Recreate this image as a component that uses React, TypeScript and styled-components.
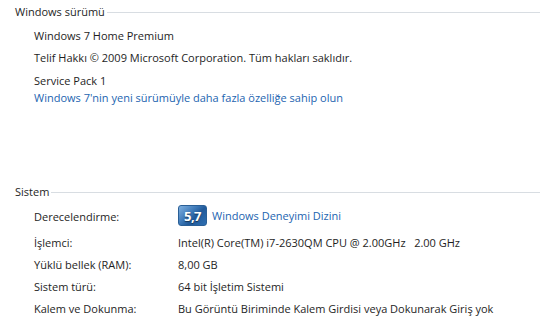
import React from "react";
import styled, { createGlobalStyle } from "styled-components";

const GlobalStyle = createGlobalStyle`
  body {
    margin: 0;
    background: #ffffff;
    font-family: "Open Sans", "Noto Sans", sans-serif;
    font-size: 11px;
    color: #1e1e1e;
  }
`;

const systemRows = [
  { label: "İşlemci:", value: "Intel(R) Core(TM) i7-2630QM CPU @ 2.00GHz   2.00 GHz" },
  { label: "Yüklü bellek (RAM):", value: "8,00 GB" },
  { label: "Sistem türü:", value: "64 bit İşletim Sistemi" },
  { label: "Kalem ve Dokunma:", value: "Bu Görüntü Biriminde Kalem Girdisi veya Dokunarak Giriş yok" },
];

function App() {
  return (
    <Page>
      <GlobalStyle />
      <Section>
        <Header>
          <HeaderText>Windows sürümü</HeaderText>
          <HeaderLine />
        </Header>
        <Body>
          <Line $gap={7}>Windows 7 Home Premium</Line>
          <Line $gap={8}>Telif Hakkı © 2009 Microsoft Corporation. Tüm hakları saklıdır.</Line>
          <Line $gap={2}>Service Pack 1</Line>
          <Link>Windows 7'nin yeni sürümüyle daha fazla özelliğe sahip olun</Link>
        </Body>
      </Section>

      <Section $top={78}>
        <Header>
          <HeaderText>Sistem</HeaderText>
          <HeaderLine />
        </Header>
        <Grid>
          <Label>Derecelendirme:</Label>
          <RatingValue>
            <Badge>5,7</Badge>
            <Link>Windows Deneyimi Dizini</Link>
          </RatingValue>
          {systemRows.map((row) => (
            <React.Fragment key={row.label}>
              <Label>{row.label}</Label>
              <Value>{row.value}</Value>
            </React.Fragment>
          ))}
        </Grid>
      </Section>
    </Page>
  );
}

const Page = styled.div`
  width: 540px;
  height: 330px;
  padding: 3px 0 0 15px;
  box-sizing: border-box;
  overflow: hidden;
`;

const Section = styled.div<{ $top?: number }>`
  margin-top: ${(p) => p.$top ?? 0}px;
`;

const Header = styled.div`
  display: flex;
  align-items: center;
  gap: 2px;
  height: 16px;
`;

const HeaderText = styled.span`
  white-space: nowrap;
`;

const HeaderLine = styled.div`
  flex: 1;
  height: 1px;
  margin-top: 2px;
  background: #d8dde2;
`;

const Body = styled.div`
  padding: 9px 0 0 19px;
  display: flex;
  flex-direction: column;
`;

const Line = styled.div<{ $gap?: number }>`
  line-height: 15px;
  margin-bottom: ${(p) => p.$gap ?? 0}px;
  white-space: pre;
`;

const Link = styled.span`
  color: #1c64b0;
  line-height: 15px;
  white-space: pre;
`;

const Grid = styled.div`
  display: grid;
  grid-template-columns: 144px 1fr;
  row-gap: 7px;
  padding: 6px 0 0 19px;
  align-items: center;
`;

const Label = styled.div`
  line-height: 15px;
  white-space: pre;
`;

const Value = styled.div`
  line-height: 15px;
  white-space: pre;
`;

const RatingValue = styled.div`
  display: flex;
  align-items: center;
  gap: 5px;
  margin-bottom: 2px;
`;

const Badge = styled.div`
  width: 29px;
  height: 21px;
  border-radius: 3px;
  box-sizing: border-box;
  border: 1px solid #2a5f96;
  background: linear-gradient(135deg, #7fb0e0 0%, #3d79b8 40%, #215a9a 60%, #2e6fb2 100%);
  color: #ffffff;
  font-weight: 700;
  font-size: 13px;
  letter-spacing: -0.5px;
  display: flex;
  align-items: center;
  justify-content: center;
  text-shadow: 0 1px 1px rgba(0, 0, 0, 0.5);
`;

export default App;
